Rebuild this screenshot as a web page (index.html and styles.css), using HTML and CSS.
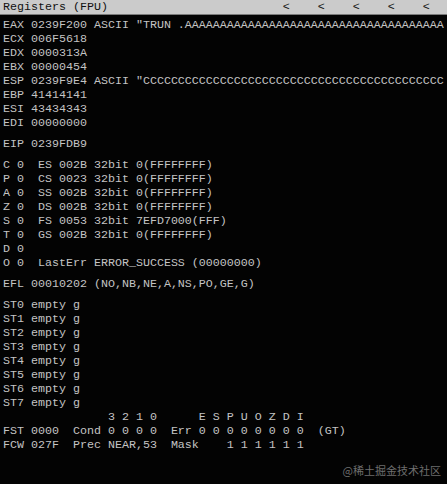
FILE: index.html
```html
<!DOCTYPE html>
<html lang="en">
<head>
  <meta charset="UTF-8" />
  <title>Registers (FPU)</title>
  <link rel="stylesheet" href="styles.css">
</head>
<body>
  <div class="pane">
    <div class="pane-title">Registers (FPU)                         &lt;    &lt;    &lt;    &lt;    &lt;</div>

    <div class="regs">
      <!-- registradores gerais -->
      <div class="group">
        <div class="row">EAX 0239F200 ASCII "TRUN .AAAAAAAAAAAAAAAAAAAAAAAAAAAAAAAAAAAAA</div>
        <div class="row">ECX 006F5618</div>
        <div class="row">EDX 0000313A</div>
        <div class="row">EBX 00000454</div>
        <div class="row">ESP 0239F9E4 ASCII "CCCCCCCCCCCCCCCCCCCCCCCCCCCCCCCCCCCCCCCCCCC</div>
        <div class="row">EBP 41414141</div>
        <div class="row">ESI 43434343</div>
        <div class="row">EDI 00000000</div>
      </div>

      <div class="group">
        <div class="row">EIP 0239FDB9</div>
      </div>

      <!-- flags e segmentos -->
      <div class="group">
        <div class="row">C 0  ES 002B 32bit 0(FFFFFFFF)</div>
        <div class="row">P 0  CS 0023 32bit 0(FFFFFFFF)</div>
        <div class="row">A 0  SS 002B 32bit 0(FFFFFFFF)</div>
        <div class="row">Z 0  DS 002B 32bit 0(FFFFFFFF)</div>
        <div class="row">S 0  FS 0053 32bit 7EFD7000(FFF)</div>
        <div class="row">T 0  GS 002B 32bit 0(FFFFFFFF)</div>
        <div class="row">D 0</div>
        <div class="row">O 0  LastErr ERROR_SUCCESS (00000000)</div>
      </div>

      <div class="group">
        <div class="row">EFL 00010202 (NO,NB,NE,A,NS,PO,GE,G)</div>
      </div>

      <!-- pilha FPU -->
      <div class="group">
        <div class="row">ST0 empty g</div>
        <div class="row">ST1 empty g</div>
        <div class="row">ST2 empty g</div>
        <div class="row">ST3 empty g</div>
        <div class="row">ST4 empty g</div>
        <div class="row">ST5 empty g</div>
        <div class="row">ST6 empty g</div>
        <div class="row">ST7 empty g</div>
        <div class="row">               3 2 1 0      E S P U O Z D I</div>
        <div class="row">FST 0000  Cond 0 0 0 0  Err 0 0 0 0 0 0 0 0  (GT)</div>
        <div class="row">FCW 027F  Prec NEAR,53  Mask    1 1 1 1 1 1</div>
      </div>
    </div>
  </div>

  <div class="watermark">@稀土掘金技术社区</div>
</body>
</html>
```

FILE: styles.css
```css
/* Painel de registradores estilo OllyDbg */
body {
  margin: 0;
  padding: 0;
  background: #030303;
  width: 447px;
  height: 484px;
  overflow: hidden;
  position: relative;
}

.pane {
  font-family: "Liberation Mono", "DejaVu Sans Mono", monospace;
  font-size: 11.67px;
}

.pane-title {
  height: 14px;
  line-height: 14px;
  padding-left: 3px;
  background: #cbcbcb;
  color: #111;
  border-bottom: 1px solid #7a7a7a;
  white-space: pre;
  overflow: hidden;
}

.regs {
  padding: 3px 0 0 3px;
  color: #c4c4c4;
}

.group {
  margin-bottom: 7px;
}

.row {
  height: 14px;
  line-height: 14px;
  white-space: pre;
  overflow: hidden;
}

.watermark {
  position: absolute;
  right: 6px;
  bottom: 6px;
  font-family: "Noto Sans CJK SC", sans-serif;
  font-size: 11px;
  color: #6e6e6e;
}
```
